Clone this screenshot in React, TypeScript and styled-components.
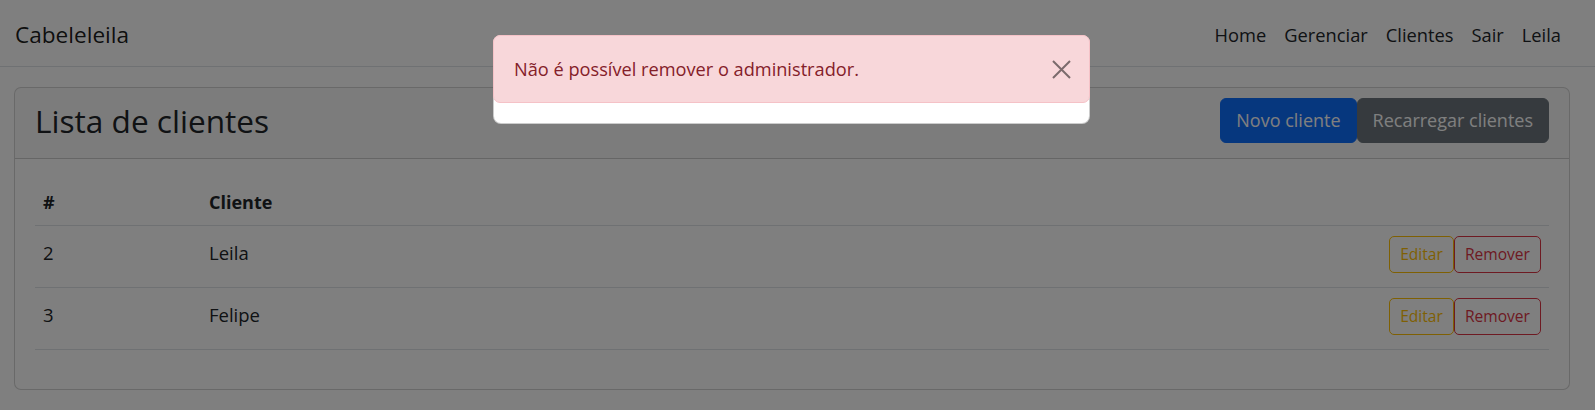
import React from "react";
import styled, { createGlobalStyle } from "styled-components";

const GlobalStyle = createGlobalStyle`
  html, body { margin: 0; padding: 0; background: #fff; }
  body {
    font-family: "Open Sans", "Noto Sans", sans-serif;
    color: #212529;
    font-size: 18.5px;
    line-height: 1.5;
  }
  * { box-sizing: border-box; }
`;

const Navbar = styled.nav`
  height: 67px;
  display: flex;
  align-items: center;
  justify-content: space-between;
  padding: 3px 34px 0 15px;
  border-bottom: 1px solid #dee2e6;
  background: #fff;
`;

const Brand = styled.a`
  font-size: 22.6px;
  color: rgba(0, 0, 0, 0.9);
  text-decoration: none;
  line-height: 1.5;
`;

const NavList = styled.div`
  display: flex;
  align-items: center;
`;

const NavLink = styled.a`
  padding: 0 9px;
  color: #212529;
  text-decoration: none;
  font-size: 18.3px;
  &:last-child { padding-right: 0; }
`;

const Main = styled.main`
  padding: 20px 25px 0 14px;
`;

const Card = styled.section`
  border: 1px solid rgba(0, 0, 0, 0.175);
  border-radius: 7px;
  background: #fff;
  overflow: hidden;
`;

const CardHeader = styled.header`
  display: flex;
  align-items: center;
  justify-content: space-between;
  padding: 10px 20px 15px 20px;
  border-bottom: 1px solid rgba(0, 0, 0, 0.175);
  background: rgba(33, 37, 41, 0.03);
`;

const Title = styled.h2`
  margin: 0;
  font-size: 31.6px;
  font-weight: 400;
  line-height: 1.2;
  color: #212529;
`;

const ButtonGroup = styled.div`
  display: flex;
  align-items: center;
`;

const BigButton = styled.button<{ $variant: "primary" | "secondary" }>`
  font-family: inherit;
  font-size: 18px;
  line-height: 27px;
  padding: 8px 15px;
  border-radius: 6px;
  color: #fff;
  border: 1px solid ${(p) => (p.$variant === "primary" ? "#0d6efd" : "#6c757d")};
  background: ${(p) => (p.$variant === "primary" ? "#0d6efd" : "#6c757d")};
  cursor: pointer;
`;

const CardBody = styled.div`
  padding: 22px 20px 23px 20px;
`;

const Table = styled.table`
  width: 100%;
  border-collapse: collapse;
  margin-bottom: 16px;
`;

const Th = styled.th<{ $w?: number }>`
  text-align: left;
  font-weight: 700;
  font-size: 18px;
  padding: 8px;
  line-height: 27.75px;
  vertical-align: bottom;
  border-bottom: 1px solid #dee2e6;
  ${(p) => (p.$w ? `width: ${p.$w}px;` : "")}
`;

const Td = styled.td`
  padding: 10px 8px 14px 8px;
  vertical-align: baseline;
  border-bottom: 1px solid #dee2e6;
  line-height: 27.75px;
`;

const ActionCell = styled(Td)`
  text-align: right;
`;

const Actions = styled.div`
  display: inline-flex;
  align-items: baseline;
`;

const SmallButton = styled.button<{ $tone: "warning" | "danger" }>`
  font-family: inherit;
  font-size: 15.6px;
  line-height: 23px;
  padding: 6px 10px;
  border-radius: 5px;
  background: transparent;
  color: ${(p) => (p.$tone === "warning" ? "#ffc107" : "#dc3545")};
  border: 1px solid ${(p) => (p.$tone === "warning" ? "#ffc107" : "#dc3545")};
  cursor: pointer;
`;

const Backdrop = styled.div`
  position: fixed;
  inset: 0;
  background: rgba(0, 0, 0, 0.5);
`;

const ModalLayer = styled.div`
  position: fixed;
  inset: 0;
  display: flex;
  justify-content: center;
  align-items: flex-start;
  padding: 35px 12px 0 0;
`;

const ModalContent = styled.div`
  width: 597px;
  background: #fff;
  border: 1px solid rgba(0, 0, 0, 0.2);
  border-radius: 8px;
  padding-bottom: 20px;
`;

const Alert = styled.div`
  display: flex;
  align-items: center;
  justify-content: space-between;
  margin: -1px -1px 0 -1px;
  padding: 19px 18px 19px 20px;
  background: #f8d7da;
  border: 1px solid #f5c2c7;
  border-radius: 7px;
  color: #842029;
  font-size: 18.2px;
  line-height: 28px;
`;

const CloseButton = styled.button`
  display: flex;
  align-items: center;
  justify-content: center;
  width: 19px;
  height: 19px;
  padding: 0;
  border: 0;
  background: transparent;
  opacity: 0.5;
  cursor: pointer;
`;

const clients = [
  { id: 2, name: "Leila" },
  { id: 3, name: "Felipe" },
];

export default function App() {
  return (
    <>
      <GlobalStyle />
      <Navbar>
        <Brand href="#">Cabeleleila</Brand>
        <NavList>
          <NavLink href="#">Home</NavLink>
          <NavLink href="#">Gerenciar</NavLink>
          <NavLink href="#">Clientes</NavLink>
          <NavLink href="#">Sair</NavLink>
          <NavLink href="#">Leila</NavLink>
        </NavList>
      </Navbar>
      <Main>
        <Card>
          <CardHeader>
            <Title>Lista de clientes</Title>
            <ButtonGroup>
              <BigButton $variant="primary">Novo cliente</BigButton>
              <BigButton $variant="secondary">Recarregar clientes</BigButton>
            </ButtonGroup>
          </CardHeader>
          <CardBody>
            <Table>
              <thead>
                <tr>
                  <Th $w={166}>#</Th>
                  <Th>Cliente</Th>
                  <Th />
                </tr>
              </thead>
              <tbody>
                {clients.map((c) => (
                  <tr key={c.id}>
                    <Td>{c.id}</Td>
                    <Td>{c.name}</Td>
                    <ActionCell>
                      <Actions>
                        <SmallButton $tone="warning">Editar</SmallButton>
                        <SmallButton $tone="danger">Remover</SmallButton>
                      </Actions>
                    </ActionCell>
                  </tr>
                ))}
              </tbody>
            </Table>
          </CardBody>
        </Card>
      </Main>
      <Backdrop />
      <ModalLayer>
        <ModalContent role="dialog">
          <Alert role="alert">
            <span>Não é possível remover o administrador.</span>
            <CloseButton aria-label="Fechar">
              <svg width="19" height="19" viewBox="0 0 19 19" fill="none">
                <path d="M1 1L18 18M18 1L1 18" stroke="#000" strokeWidth="2" />
              </svg>
            </CloseButton>
          </Alert>
        </ModalContent>
      </ModalLayer>
    </>
  );
}
